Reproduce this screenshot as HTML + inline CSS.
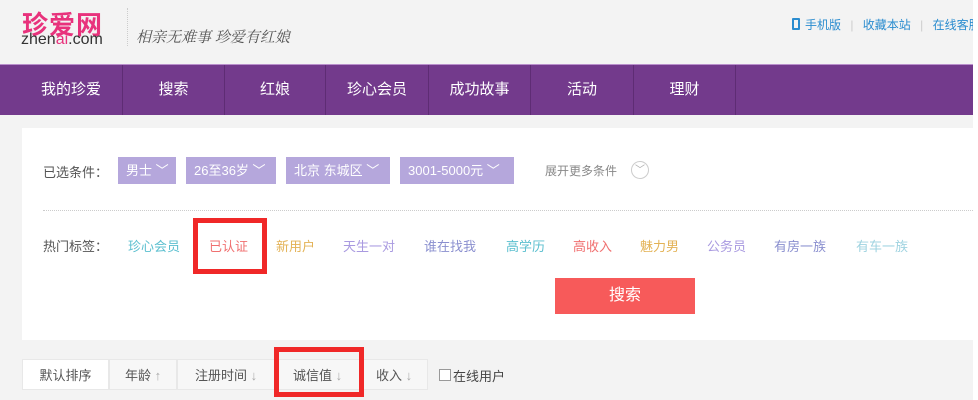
<!DOCTYPE html>
<html><head><meta charset="utf-8"><style>
*{margin:0;padding:0;box-sizing:border-box}
body{width:978px;height:400px;background:#f3f3f3;font-family:"Liberation Sans","Noto Sans CJK SC",sans-serif;position:relative;overflow:hidden}
.a{position:absolute;white-space:nowrap}
.nav{left:0;top:64px;width:973px;height:51px;background:#733a8c;border-top:1px solid #b98fcc}
.nav span{position:absolute;top:0;height:50px;line-height:50px;color:#fff;font-size:15px;text-align:center;border-right:1px solid #5e2c74}
.panel{left:22px;top:128px;width:951px;height:212px;background:#fff}
.tag{position:absolute;top:157px;height:27px;line-height:27px;background:#b5a7dc;color:#fff;font-size:13px;padding-left:8px}
.hot{position:absolute;top:236px;font-size:13px}
.sort{position:absolute;top:359px;height:31px;line-height:31px;font-size:13px;color:#555;background:#f7f7f7;border:1px solid #e8e8e8;text-align:center}
.rb{position:absolute;border:5px solid #f02828}
</style></head><body>
<div class="a" style="left:22px;top:5px;font-size:26px;font-weight:bold;color:#e8327c;letter-spacing:1px">珍爱网</div>
<div class="a" style="left:21px;top:31px;font-size:16px;color:#333">zhen<span style="color:#e8327c">ai</span>.com</div>
<div class="a" style="left:127px;top:8px;width:1px;height:38px;border-left:1px dotted #ccc"></div>
<div class="a" style="left:136px;top:26px;font-size:15px;color:#555;font-family:'Noto Serif CJK SC',serif;font-style:italic">相亲无难事 珍爱有红娘</div>
<div class="a" style="left:792px;top:18px;width:8px;height:12px;border:2px solid #2a8ccf;border-radius:1px"></div>
<div class="a" style="left:805px;top:16px;font-size:12px;color:#2a8ccf">手机版 <span style="color:#ccc;margin:0 6px">|</span> 收藏本站 <span style="color:#ccc;margin:0 6px">|</span> 在线客服</div>
<div class="a" style="left:973px;top:0;width:5px;height:400px;background:#fff"></div>
<div class="a nav">
<span style="left:0;width:123px;padding-left:20px">我的珍爱</span>
<span style="left:123px;width:102px">搜索</span>
<span style="left:225px;width:101px">红娘</span>
<span style="left:326px;width:103px">珍心会员</span>
<span style="left:429px;width:102px">成功故事</span>
<span style="left:531px;width:103px">活动</span>
<span style="left:634px;width:102px">理财</span>
</div>
<div class="a panel"></div>
<div class="a" style="left:43px;top:162px;font-size:13px;color:#555">已选条件：</div>
<div class="tag" style="left:118px;width:58px">男士 ﹀</div>
<div class="tag" style="left:186px;width:90px">26至36岁 ﹀</div>
<div class="tag" style="left:286px;width:104px">北京 东城区 ﹀</div>
<div class="tag" style="left:400px;width:114px">3001-5000元 ﹀</div>
<div class="a" style="left:545px;top:162px;font-size:12px;color:#888">展开更多条件</div>
<div class="a" style="left:631px;top:161px;width:18px;height:18px;border:1px solid #ccc;border-radius:50%;color:#aaa;font-size:10px;text-align:center;line-height:17px">﹀</div>
<div class="a" style="left:43px;top:210px;width:930px;border-top:1px dotted #ccc"></div>
<div class="a" style="left:43px;top:236px;font-size:13px;color:#555">热门标签：</div>
<div class="hot" style="left:128px;color:#5bbfcf">珍心会员</div>
<div class="hot" style="left:209px;color:#f07070">已认证</div>
<div class="hot" style="left:276px;color:#e3b255">新用户</div>
<div class="hot" style="left:343px;color:#a99ae0">天生一对</div>
<div class="hot" style="left:424px;color:#8a8fcf">谁在找我</div>
<div class="hot" style="left:506px;color:#5bbfcf">高学历</div>
<div class="hot" style="left:573px;color:#f07070">高收入</div>
<div class="hot" style="left:640px;color:#e3b255">魅力男</div>
<div class="hot" style="left:707px;color:#a99ae0">公务员</div>
<div class="hot" style="left:774px;color:#8a8fcf">有房一族</div>
<div class="hot" style="left:856px;color:#9fd3e0">有车一族</div>
<div class="rb" style="left:193px;top:218px;width:74px;height:56px"></div>
<div class="a" style="left:555px;top:278px;width:140px;height:36px;background:#f75a5a;color:#fff;font-size:16px;text-align:center;line-height:36px">搜索</div>
<div class="sort" style="left:22px;width:87px;background:#fff">默认排序</div>
<div class="sort" style="left:109px;width:68px">年龄 <span style="color:#aaa">↑</span></div>
<div class="sort" style="left:177px;width:98px">注册时间 <span style="color:#aaa">↓</span></div>
<div class="sort" style="left:275px;width:85px">诚信值 <span style="color:#aaa">↓</span></div>
<div class="sort" style="left:360px;width:68px">收入 <span style="color:#aaa">↓</span></div>
<div class="a" style="left:439px;top:369px;width:12px;height:12px;border:1px solid #999;background:#fff"></div>
<div class="a" style="left:453px;top:366px;font-size:13px;color:#444">在线用户</div>
<div class="rb" style="left:274px;top:347px;width:90px;height:50px"></div>
</body></html>
